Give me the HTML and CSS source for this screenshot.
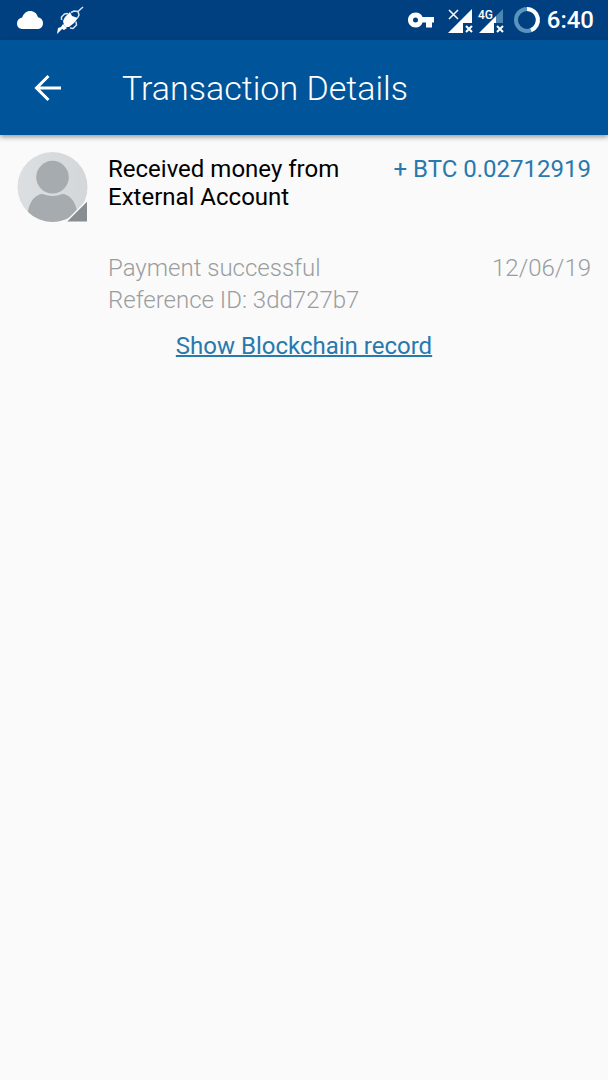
FILE: index.html
```html
<!DOCTYPE html>
<html lang="en">
<head>
<meta charset="utf-8">
<meta name="viewport" content="width=device-width, initial-scale=1">
<title>Transaction Details</title>
<link rel="stylesheet" href="styles.css">
</head>
<body>
<div class="status-bar">
  <div class="status-group status-notifications">
    <svg class="icon-cloud" viewBox="0 0 28 20" role="img" aria-label="Cloud"><path d="M7 19C3 19 1 16.800 1 13.500C1 10 3 8 6.200 7.500C7.500 3.500 10.500 1 14 1C18 1 21 3.400 22 7.300C25.200 8 27 10 27 13C27 17 24.500 19 21 19Z"/></svg>
    <svg class="icon-rocket" viewBox="0 0 28 28" role="img" aria-label="Rocket">
      <path d="M8 19L7 15L9 11L14 6L16 10L22 12L18 17L13 21L10 21Z"/>
      <path d="M7 18L11 22L8 24L6 23L1 28L2 22L5 21Z"/>
      <path class="rocket-line" d="M15 6.500L18 5L22 5.500L23 9L21.500 12M22 5.500L27 1M12 7.500L8.500 8L5.500 11L5.500 14M20 15.500L20.500 19L17 22.500L14 22"/>
    </svg>
  </div>
  <div class="status-group status-system">
    <svg class="icon-key" viewBox="0 0 28 20" role="img" aria-label="VPN"><path fill-rule="evenodd" d="M15.500 7C14.500 4.200 12 2.500 8.700 2.500C4.300 2.500 1 5.800 1 10S4.300 17.500 8.700 17.500C12 17.500 14.500 15.800 15.500 12.500H19V17.500H25V12.500H27V7ZM8.500 7.500A2.500 2.500 0 1 1 8.500 12.500A2.500 2.500 0 1 1 8.500 7.500Z"/></svg>
    <svg class="icon-signal" viewBox="0 0 28 28" role="img" aria-label="No signal">
      <path d="M25 3V17H16V27H1Z"/>
      <path class="cross" d="M2 4L11 13M11 4L2 13"/>
      <path class="cross cross-small" d="M19 20L25 26M25 20L19 26"/>
    </svg>
    <svg class="icon-signal" viewBox="0 0 28 28" role="img" aria-label="4G signal">
      <path class="faint" d="M26 3V17H19V10Z"/>
      <path d="M19 10V17H17V27H2Z"/>
      <path class="cross cross-small" d="M20 20L26 26M26 20L20 26"/>
      <text class="network" x="1" y="13">4G</text>
    </svg>
    <svg class="icon-battery" viewBox="0 0 28 28" role="img" aria-label="Battery">
      <circle class="ring faint-ring" cx="14" cy="14" r="11"/>
      <path class="ring" d="M14 3A11 11 0 0 1 18 24.200"/>
    </svg>
    <time class="clock">6:40</time>
  </div>
</div>
<header class="app-bar">
  <button class="back" type="button" aria-label="Back"><svg viewBox="0 0 28 28" aria-hidden="true"><path d="M27 14H3M14.500 2L2.500 14L14.500 26"/></svg></button>
  <h1 class="title">Transaction Details</h1>
</header>
<main class="details">
  <svg class="avatar" viewBox="0 0 72 72" role="img" aria-label="External Account">
    <defs><clipPath id="avatar-disc"><circle cx="36" cy="36" r="35.500"/></clipPath>
    <linearGradient id="disc-shade"><stop offset="0" stop-color="#dcdfe1"/><stop offset="1" stop-color="#d4d7d9"/></linearGradient></defs>
    <g clip-path="url(#avatar-disc)">
      <rect width="72" height="72" fill="url(#disc-shade)"/>
      <circle cx="36" cy="26" r="16.500" fill="#a5abaf"/>
      <path d="M11 72V62C12 51 19 43 26 43Q36 47 46 43C53 43 60 51 61 62V72Z" fill="#a5abaf"/>
    </g>
    <path d="M51 71L71 51V71Z" fill="#888d91" stroke="#fafafa" stroke-width="3" paint-order="stroke"/>
  </svg>
  <div class="content">
    <div class="row summary">
      <p class="party">Received money from External Account</p>
      <p class="amount">+ BTC 0.02712919</p>
    </div>
    <div class="row meta">
      <p>Payment successful<br>Reference ID: 3dd727b7</p>
      <time datetime="2019-06-12">12/06/19</time>
    </div>
  </div>
</main>
<a class="record-link" href="#">Show Blockchain record</a>
</body>
</html>
```
FILE: styles.css
```css
* { box-sizing: border-box; }
body {
  display: flex;
  flex-direction: column;
  min-height: 100vh;
  margin: 0;
  background: #fafafa;
  color: #000;
  font: 400 24px/28px Roboto, "Noto Sans", sans-serif;
}
p, h1 { margin: 0; font-weight: inherit; }
.status-bar {
  display: flex;
  align-items: center;
  justify-content: space-between;
  height: 40px;
  padding: 0 14px 0 16px;
  background: #004080;
  color: #fff;
}
.status-group { display: flex; align-items: center; }
.status-notifications { gap: 12px; }
.status-system { gap: 8px; }
.status-group svg { fill: #fff; width: 28px; height: 28px; }
.status-group .icon-cloud, .status-group .icon-key { height: 20px; }
.icon-key { margin-right: 4px; }
.icon-signal { margin-right: -6px; }
.icon-battery { margin: 0 -2px 0 6px; }
.rocket-line { fill: none; stroke: #d5e5f2; stroke-width: 1.5; }
.cross { fill: none; stroke: #fff; stroke-width: 1.5; }
.cross-small { stroke-width: 2; }
.status-group .faint { fill: #4f86b1; }
.network { font: 500 12px Roboto, sans-serif; }
.ring { fill: none; stroke: #fff; stroke-width: 4; }
.faint-ring { stroke: #5a94bd; }
.clock { font-size: 24px; font-weight: 500; }
.app-bar {
  display: flex;
  align-items: center;
  gap: 60px;
  height: 95px;
  padding: 0 34px;
  background: #005499;
  color: #fff;
  box-shadow: 0 2px 5px #0006;
}
.back { display: flex; padding: 0; border: 0; background: none; }
.back svg { width: 28px; height: 28px; fill: none; stroke: #fff; stroke-width: 3; }
.title { font-size: 34px; line-height: 36px; font-weight: 300; }
.details {
  display: flex;
  align-items: flex-start;
  gap: 20px;
  padding: 16px 17px 0;
}
.avatar { flex: none; width: 71px; height: 72px; }
.content { flex: 1; padding-top: 4px; }
.row { display: flex; justify-content: space-between; gap: 24px; }
.amount { flex: none; color: #2779ae; }
.party { max-width: 260px; }
.meta { margin-top: 41px; color: #999da0; font-weight: 300; line-height: 32px; }
.record-link {
  align-self: center;
  margin-top: 16px;
  color: #2779ae;
  text-decoration-thickness: 2px;
  text-underline-offset: 1px;
}
```
